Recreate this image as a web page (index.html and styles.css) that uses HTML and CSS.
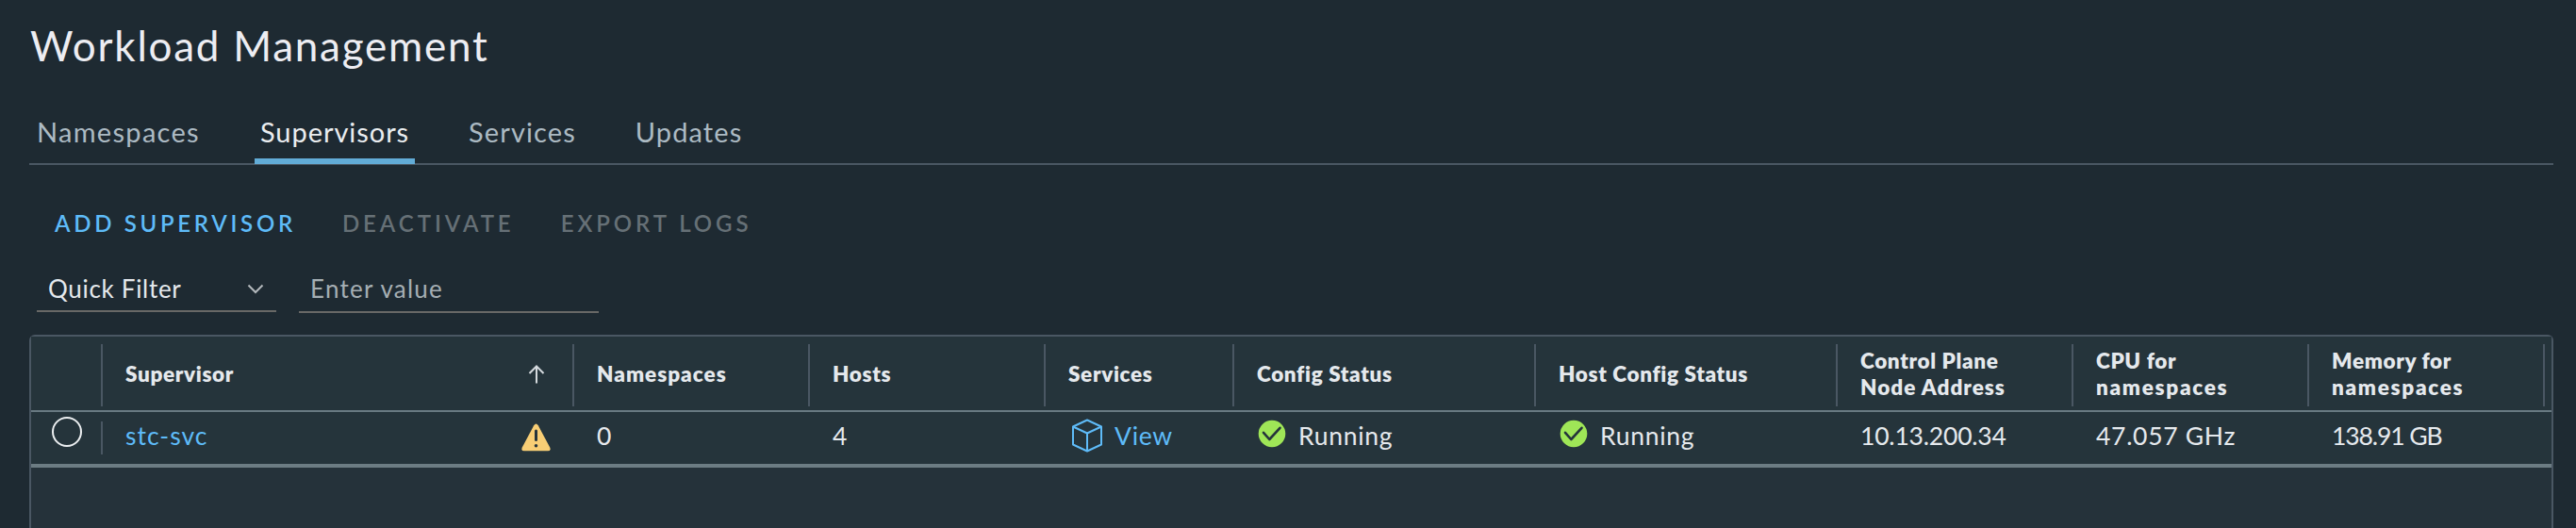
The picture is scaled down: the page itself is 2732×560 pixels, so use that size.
FILE: index.html
```html
<!DOCTYPE html>
<html lang="en">
<head>
<meta charset="utf-8">
<title>Workload Management</title>
<link rel="stylesheet" href="styles.css">
</head>
<body>
<main class="page">
  <h1 class="title">Workload Management</h1>
  <nav class="tabs">
    <a class="tab first">Namespaces</a>
    <a class="tab active">Supervisors</a>
    <a class="tab">Services</a>
    <a class="tab">Updates</a>
  </nav>
  <div class="actions">
    <button class="action primary">ADD SUPERVISOR</button>
    <button class="action">DEACTIVATE</button>
    <button class="action">EXPORT LOGS</button>
  </div>
  <div class="filters">
    <div class="select"><span>Quick Filter</span>
      <svg class="chevron" viewBox="0 0 18 11"><path d="M1.500 1.500 9 9l7.500-7.500"/></svg>
    </div>
    <div class="input">Enter value</div>
  </div>
  <section class="grid">
    <div class="row head">
      <div class="cell"></div>
      <div class="cell sorted"><span>Supervisor</span>
        <svg class="arrow" viewBox="0 0 18 20"><path d="M9 19.500V1.500M1.500 9 9 1.500 16.500 9"/></svg>
      </div>
      <div class="cell names">Namespaces</div>
      <div class="cell">Hosts</div>
      <div class="cell">Services</div>
      <div class="cell">Config Status</div>
      <div class="cell">Host Config Status</div>
      <div class="cell"><span>Control Plane<br><span class="loose">Node Address</span></span></div>
      <div class="cell"><span>CPU for<br><span class="wide">namespaces</span></span></div>
      <div class="cell"><span>Memory for<br><span class="wide">namespaces</span></span></div>
    </div>
    <div class="row data">
      <div class="cell pick"><i class="radio"></i></div>
      <div class="cell sorted"><a class="link name">stc-svc</a>
        <svg class="warning" viewBox="0 0 31 30"><path class="tri" d="M13.200 2.200Q15.500-1 17.800 2.200L30.200 25.600Q31.700 29.300 28 29.300H3Q-.7 29.300 .8 25.600Z"/><path class="mark" d="M15.500 8v9.500"/><circle class="dot" cx="15.500" cy="23.700" r="1.800"/></svg>
      </div>
      <div class="cell">0</div>
      <div class="cell">4</div>
      <div class="cell"><svg class="cube" viewBox="0 0 34 36"><path d="M17 1.500 32 8.500V27.500L17 34.500 2 27.500V8.500ZM2 8.500 17 15.500 32 8.500M17 15.500V34.500"/></svg><a class="link">View</a></div>
      <div class="cell"><svg class="check" viewBox="0 0 30 30"><circle cx="15" cy="15" r="14.300"/><path d="M6 13.800 12.300 21 23.500 8.800"/></svg><span>Running</span></div>
      <div class="cell"><svg class="check" viewBox="0 0 30 30"><circle cx="15" cy="15" r="14.300"/><path d="M6 13.800 12.300 21 23.500 8.800"/></svg><span>Running</span></div>
      <div class="cell address">10.13.200.34</div>
      <div class="cell">47.057 GHz</div>
      <div class="cell memory">138.91 GB</div>
    </div>
  </section>
</main>
</body>
</html>
```
FILE: styles.css
```css
* { box-sizing: border-box; }
body {
  margin: 0;
  height: 560px;
  overflow: hidden;
  background: #1e2a32;
  color: #e5e9ed;
  font-family: Lato, "Open Sans", sans-serif;
}
.page { display: flex; flex-direction: column; height: 560px; padding: 24px 24px 0 31px; }
.title { margin: 0; padding-left: 1px; font-size: 44px; font-weight: 400; line-height: 48px; letter-spacing: 1.750px; color: #ededf2; }
.tabs { display: flex; flex: none; gap: 51px; width: 2677px; height: 71px; margin-top: 32px; padding-left: 2px; border-bottom: 2px solid #4a5763; }
.tab { height: 70px; padding: 7px 6px 0; font-size: 29px; line-height: 58px; letter-spacing: 1.100px; color: #acbac3; border-bottom: 6px solid transparent; }
.tab.first { margin-right: 1px; letter-spacing: 1.300px; }
.tab.active { letter-spacing: 0.950px; color: #eaedf0; border-color: #62acd7; }
.actions { display: flex; flex: none; gap: 49px; height: 58px; margin-top: 32px; padding-left: 27px; }
.action { padding: 0; border: 0; background: none; font: 600 24px/59px Lato, sans-serif; letter-spacing: 3.950px; color: #667076; }
.action.primary { color: #5ebbf8; letter-spacing: 3.700px; }
.filters { display: flex; flex: none; gap: 24px; height: 67px; margin: 14px 0 9px; padding-left: 8px; font-size: 26px; line-height: 50px; }
.select { display: flex; justify-content: space-between; align-items: center; width: 254px; height: 52px; padding: 3px 13px 0 12px; letter-spacing: 0.700px; border-bottom: 2px solid #686866; }
.input { width: 318px; height: 53px; padding: 2px 12px 0; letter-spacing: 1.250px; color: #a5aeb3; border-bottom: 2px solid #686866; }
.chevron { width: 18px; height: 11px; margin-top: 1px; fill: none; stroke: #b3b8bc; stroke-width: 2; }
.grid { flex: 1; width: 2677px; border: 2px solid #4a5763; border-bottom: 0; border-radius: 6px 6px 0 0; background: #25323a; }
.row { display: grid; grid-template-columns: 76px 500px 250px 250px 200px 320px 320px 250px 250px 250px; background: #25343b; }
.head { height: 80px; padding-top: 8px; border-bottom: 2px solid #687981; font-size: 22.500px; font-weight: 800; line-height: 28px; letter-spacing: 0.650px; }
.data { height: 59px; border-bottom: 4px solid #6c7c83; font-size: 26.500px; line-height: 48px; letter-spacing: 0.700px; }
.cell { display: flex; align-items: center; padding-left: 24px; }
.head .cell { height: 66px; padding-bottom: 3px; border-right: 2px solid #4a5763; }
.head .names { letter-spacing: 1px; }
.loose { letter-spacing: 1px; }
.wide { letter-spacing: 1.700px; }
.data .cell { height: 50px; }
.data .address { letter-spacing: -0.200px; }
.data .memory { letter-spacing: -1.100px; }
.data .pick { height: 35px; margin-top: 10px; padding: 0 0 13px 22px; border-right: 2px solid #4a5763; }
.sorted { justify-content: space-between; padding-right: 25px; }
.link { color: #5ebbf8; }
.name { letter-spacing: 1px; }
.arrow { width: 18px; height: 20px; margin-right: 4px; fill: none; stroke: #d5dade; stroke-width: 2; }
.radio { flex: none; width: 32px; height: 32px; border: 2px solid #eceff1; border-radius: 50%; }
.warning { width: 31px; height: 30px; margin-top: 3px; }
.tri { fill: #f8ce75; }
.mark { stroke: #25343b; stroke-width: 3; stroke-linecap: round; }
.dot { fill: #25343b; }
.cube { width: 34px; height: 36px; margin: 0 12px 1px 3px; fill: none; stroke: #5ebbf8; stroke-width: 2; stroke-linejoin: round; }
.check { width: 30px; height: 30px; margin: 0 13px 4px 1px; }
.check circle { fill: #9fe657; }
.check path { fill: none; stroke: #25343b; stroke-width: 2.600; stroke-linecap: round; stroke-linejoin: round; }
```
